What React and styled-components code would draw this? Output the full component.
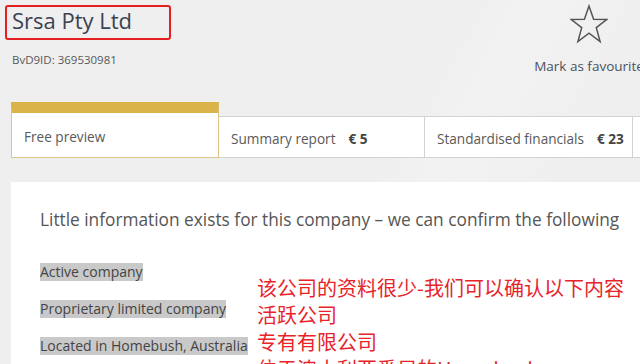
import React from "react";
import styled, { createGlobalStyle } from "styled-components";

const GlobalStyle = createGlobalStyle`
  html, body {
    margin: 0;
    padding: 0;
    height: 364px;
    overflow: hidden;
    background: #efefef;
  }
  body {
    font-family: "Open Sans", "Noto Sans", sans-serif;
  }
`;

const Page = styled.div`
  width: 700px;
  height: 364px;
  overflow: hidden;
  background: linear-gradient(118deg, #efefef 0%, #efefef 52%, #f2f2f2 60%, #efefef 75%);
`;

// Header: company name + favourite button
const Header = styled.header`
  display: flex;
  justify-content: space-between;
  align-items: flex-start;
  height: 102px;
  width: 646px;
`;

const TitleBlock = styled.div`
  padding: 5px 0 0 5px;
`;

const NameBox = styled.div`
  width: 157px;
  height: 31px;
  border: 2px solid #e3201f;
  border-radius: 3px;
  padding-left: 5px;
  display: flex;
  align-items: center;
`;

const Name = styled.h1`
  margin: 0;
  font-size: 22px;
  font-weight: 400;
  color: #3b4252;
  line-height: 1;
  position: relative;
  top: -3px;
`;

const BvdId = styled.div`
  margin: 12px 0 0 7px;
  font-size: 11.5px;
  color: #585858;
`;

const Favourite = styled.div`
  display: flex;
  flex-direction: column;
  align-items: center;
  padding-top: 4px;
  width: 114px;
  font-size: 13.5px;
  color: #4a5262;
  white-space: nowrap;

  svg {
    display: block;
    margin-bottom: 13px;
  }
`;

// Tabs
const Tabs = styled.div`
  display: flex;
  align-items: flex-end;
  margin-left: 11px;
  height: 56px;
`;

const Tab = styled.div`
  box-sizing: border-box;
  width: ${(p) => p.$width}px;
  height: ${(p) => (p.$active ? 56 : 42)}px;
  background: #ffffff;
  border: 1px solid ${(p) => (p.$active ? "#d8c587" : "#d2d2d2")};
  border-left: ${(p) => (p.$first || p.$active ? "" : "none")};
  border-top: ${(p) => (p.$active ? "11px solid #dab34a" : "")};
  display: flex;
  align-items: center;
  gap: 13px;
  padding: 3px 0 0 12px;
  font-size: 13.6px;
  color: #595959;
  white-space: nowrap;
`;

const Price = styled.span`
  font-weight: 700;
  color: #444;
`;

// Content panel
const Panel = styled.section`
  margin: 24px 0 0 11px;
  background: #ffffff;
  height: 200px;
  padding: 26px 0 0 29px;
  overflow: hidden;
`;

const Lead = styled.h2`
  margin: 0;
  font-size: 17.3px;
  line-height: 24px;
  font-weight: 400;
  color: #555;
  white-space: nowrap;
`;

const Body = styled.div`
  display: flex;
  margin-top: 31px;
`;

const Facts = styled.ul`
  list-style: none;
  margin: 0;
  padding: 0;
  width: 217px;
  display: flex;
  flex-direction: column;
  gap: 19px;
`;

const Fact = styled.li`
  display: flex;

  span {
    background: #c9c9c9;
    font-size: 14px;
    line-height: 18px;
    color: #444;
    white-space: nowrap;
  }
`;

const Note = styled.div`
  margin-top: 11px;
  font-family: "Noto Sans CJK SC", sans-serif;
  font-size: 20px;
  line-height: 27px;
  color: #e8232a;
  white-space: nowrap;
`;

const Star = () => (
  <svg width="38" height="40" viewBox="0 0 38 40" fill="none">
    <path
      d="M19 2 L23.6 15.2 L37 15.4 L26.3 23.6 L30.1 37.5 L19 29.2 L7.9 37.5 L11.7 23.6 L1 15.4 L14.4 15.2 Z"
      stroke="#555"
      strokeWidth="1.5"
      strokeLinejoin="miter"
    />
  </svg>
);

const App = () => (
  <Page>
    <GlobalStyle />
    <Header>
      <TitleBlock>
        <NameBox>
          <Name>Srsa Pty Ltd</Name>
        </NameBox>
        <BvdId>BvD9ID: 369530981</BvdId>
      </TitleBlock>
      <Favourite>
        <Star />
        Mark as favourite
      </Favourite>
    </Header>

    <Tabs>
      <Tab $width={208} $active>
        Free preview
      </Tab>
      <Tab $width={206}>
        Summary report <Price>€ 5</Price>
      </Tab>
      <Tab $width={208}>
        Standardised financials <Price>€ 23</Price>
      </Tab>
      <Tab $width={40} />
    </Tabs>

    <Panel>
      <Lead>Little information exists for this company – we can confirm the following</Lead>
      <Body>
        <Facts>
          <Fact><span>Active company</span></Fact>
          <Fact><span>Proprietary limited company</span></Fact>
          <Fact><span>Located in Homebush, Australia</span></Fact>
        </Facts>
        <Note>
          <div>该公司的资料很少-我们可以确认以下内容</div>
          <div>活跃公司</div>
          <div>专有有限公司</div>
          <div>位于澳大利亚悉尼的Homebush</div>
        </Note>
      </Body>
    </Panel>
  </Page>
);

export default App;
